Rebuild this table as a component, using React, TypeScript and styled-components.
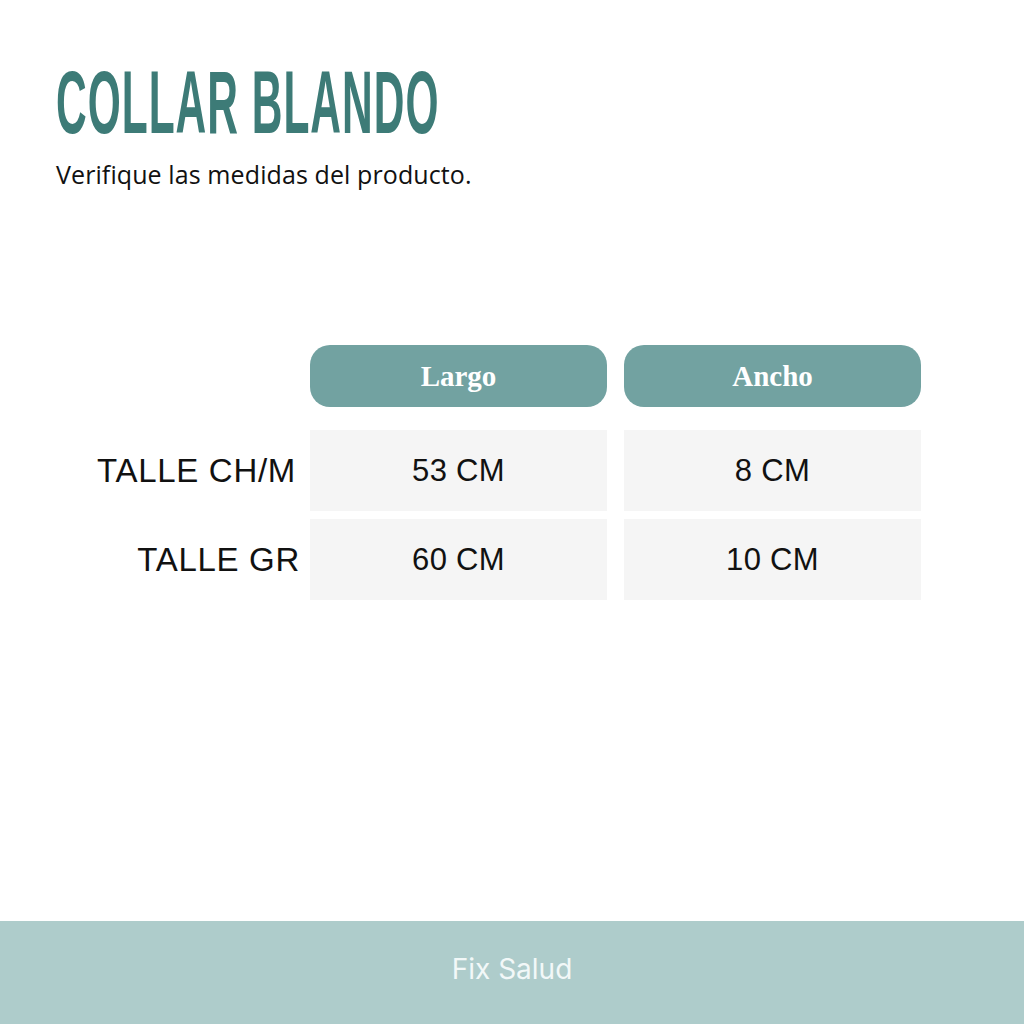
import styled, { createGlobalStyle } from "styled-components";

const GlobalStyle = createGlobalStyle`
  html, body {
    margin: 0;
    padding: 0;
    background: #ffffff;
  }
`;

const Page = styled.div`
  width: 1024px;
  height: 1024px;
  display: flex;
  flex-direction: column;
  background: #ffffff;
  overflow: hidden;
`;

const Main = styled.main`
  flex: 1;
  padding: 58px 0 0 56px;
  display: flex;
  flex-direction: column;
`;

const Title = styled.h1`
  margin: 0;
  color: #3d7b77;
  font-family: "Liberation Sans", Arial, sans-serif;
  font-weight: 700;
  font-size: 89px;
  line-height: 89px;
  letter-spacing: 2px;
  white-space: nowrap;
  transform: scaleX(0.478);
  transform-origin: left center;
`;

const Subtitle = styled.p`
  margin: 12px 0 0;
  color: #111111;
  font-family: "Open Sans", sans-serif;
  font-size: 25px;
  line-height: 30px;
  letter-spacing: 0.1px;
`;

const Table = styled.div`
  margin-top: 156px;
  display: grid;
  grid-template-columns: 237px 297px 297px;
  column-gap: 17px;
  row-gap: 8px;
`;

const Row = styled.div`
  display: contents;
`;

const Pill = styled.div`
  height: 62px;
  border-radius: 20px;
  background: #72a2a1;
  color: #ffffff;
  display: flex;
  align-items: center;
  justify-content: center;
  font-family: "Liberation Serif", "DejaVu Serif", serif;
  font-weight: 700;
  font-size: 29px;
  margin-bottom: 15px;
`;

const Label = styled.div<{ $shift?: number }>`
  display: flex;
  align-items: center;
  justify-content: flex-end;
  margin-right: ${(p) => -(p.$shift ?? 0)}px;
  color: #111111;
  font-family: "Liberation Sans", Arial, sans-serif;
  font-size: 33px;
  letter-spacing: 0.7px;
`;

const Cell = styled.div`
  height: 81px;
  background: #f5f5f5;
  display: flex;
  align-items: center;
  justify-content: center;
  color: #111111;
  font-family: "Liberation Sans", Arial, sans-serif;
  font-size: 31px;
  letter-spacing: 0.3px;
`;

const Footer = styled.footer`
  height: 103px;
  background: #aecccb;
  display: flex;
  align-items: center;
  justify-content: center;
  color: #f2f8f8;
  font-family: Inter, "Liberation Sans", sans-serif;
  font-size: 28px;
  padding-bottom: 8px;
  box-sizing: border-box;
`;

const rows = [
  { label: "TALLE CH/M", largo: "53 CM", ancho: "8 CM", shift: 3 },
  { label: "TALLE GR", largo: "60 CM", ancho: "10 CM", shift: 7 },
];

export default function App() {
  return (
    <>
      <GlobalStyle />
      <Page>
        <Main>
          <Title>COLLAR BLANDO</Title>
          <Subtitle>Verifique las medidas del producto.</Subtitle>
          <Table>
            <Row>
              <div />
              <Pill>Largo</Pill>
              <Pill>Ancho</Pill>
            </Row>
            {rows.map((r) => (
              <Row key={r.label}>
                <Label $shift={r.shift}>{r.label}</Label>
                <Cell>{r.largo}</Cell>
                <Cell>{r.ancho}</Cell>
              </Row>
            ))}
          </Table>
        </Main>
        <Footer>Fix Salud</Footer>
      </Page>
    </>
  );
}
